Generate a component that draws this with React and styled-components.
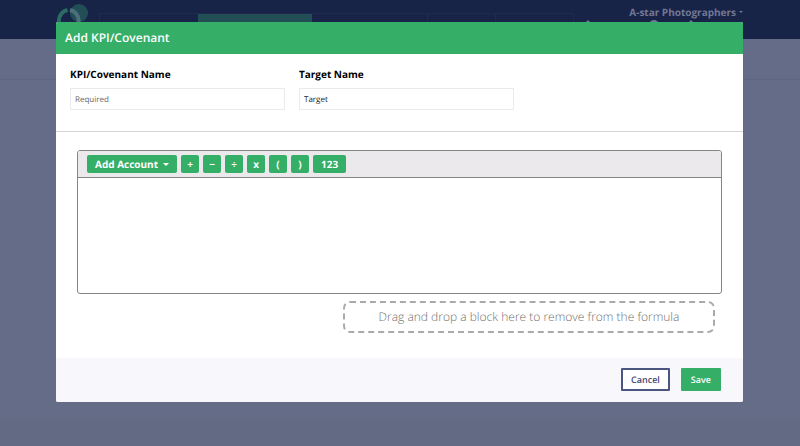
import React from 'react';
import styled, { createGlobalStyle } from 'styled-components';

const GlobalStyle = createGlobalStyle`
    * {
        box-sizing: border-box;
    }

    body {
        margin: 0;
        background: #656c87;
        font-family: 'Open Sans', 'Noto Sans', sans-serif;
        text-rendering: geometricPrecision;
    }

    button,
    input {
        font-family: inherit;
        text-rendering: inherit;
    }
`;

const Page = styled.div`
    position: relative;
    min-height: 100vh;
    display: flex;
    flex-direction: column;
`;

const TopBar = styled.header`
    height: 39px;
    flex: none;
    overflow: hidden;
    display: flex;
    align-items: flex-start;
    padding: 0 57px 0 56px;
    background: #182348;
`;

const Logo = styled.svg`
    width: 34px;
    height: 34px;
    flex: none;
    margin-top: 4px;
`;

const Tabs = styled.nav`
    flex: 474;
    display: flex;
    height: 26px;
    margin: 13px 0 0 9px;
    border: 1px solid #1f2a4e;
`;

const Tab = styled.a`
    flex: ${props => props.$size};
    background: ${props => (props.$active ? '#214f55' : 'transparent')};
    border-right: 1px solid ${props => (props.$divided ? '#1f2a4e' : 'transparent')};
`;

const Account = styled.div`
    flex: 170;
    display: flex;
    flex-direction: column;
    align-items: flex-end;
    padding-top: 4px;
`;

const AccountMenu = styled.button`
    display: flex;
    align-items: center;
    gap: 3px;
    padding: 0;
    border: 0;
    background: none;
    color: #727892;
    font-size: 10px;
    line-height: 16px;
    font-weight: 700;
    white-space: nowrap;
`;

const AccountIcons = styled.svg`
    width: 160px;
    height: 12px;
`;

const Caret = styled.span`
    border: ${props => props.$size}px solid transparent;
    border-top-color: currentColor;
    border-bottom: 0;
`;

const PageBody = styled.main`
    flex: 1;
    display: flex;
    flex-direction: column;
    justify-content: space-between;
`;

const SubBar = styled.div`
    height: 41px;
    border-bottom: 1px solid #606681;
`;

const PageFooter = styled.div`
    height: 27px;
    background: #626a84;
`;

const Modal = styled.section`
    position: absolute;
    top: 22px;
    left: 56px;
    right: 57px;
    overflow: hidden;
    border-radius: 2px;
    background: #fff;
`;

const ModalTitle = styled.h1`
    margin: 0;
    padding: 0 9px;
    background: #35ae68;
    color: #fff;
    font-size: 12px;
    line-height: 32px;
    font-weight: 600;
`;

const Fields = styled.div`
    display: flex;
    gap: 14px;
    padding: 12px 14px 21px;
    border-bottom: 1px solid #d5d5d5;
`;

const Field = styled.label`
    flex: 0 1 215px;
    display: flex;
    flex-direction: column;
    gap: 6px;
    color: #000;
    font-size: 10px;
    line-height: 16px;
    font-weight: 700;
`;

const TextInput = styled.input`
    width: 100%;
    height: 22px;
    padding: 0 4px;
    border: 1px solid #ebebeb;
    background: #fff;
    color: #222;
    font-size: 8px;

    &::placeholder {
        color: #666;
        opacity: 1;
    }
`;

const Builder = styled.div`
    display: flex;
    flex-direction: column;
    align-items: flex-end;
    gap: 7px;
    padding: 18px 21px 25px;
`;

const Editor = styled.div`
    width: 100%;
    overflow: hidden;
    border: 1px solid #858585;
    border-radius: 3px;
`;

const Toolbar = styled.div`
    display: flex;
    gap: 4px;
    padding: 4px 9px;
    border-bottom: 1px solid #858585;
    background: #ebe9eb;
`;

const ToolButton = styled.button`
    display: flex;
    align-items: center;
    justify-content: center;
    gap: 5px;
    min-width: 18px;
    height: 18px;
    padding: 0 ${props => (props.$wide ? 8 : 0)}px;
    border: 0;
    border-radius: 2px;
    background: #35ae68;
    color: #fff;
    font-size: 10px;
    line-height: 18px;
    font-weight: 700;
    white-space: nowrap;
`;

const Formula = styled.div`
    height: 115px;
`;

const DropZone = styled.div`
    width: 372px;
    max-width: 100%;
    margin-right: 7px;
    border: 2px dashed #aaa;
    border-radius: 7px;
    color: #707070;
    font-size: 12px;
    line-height: 28px;
    font-weight: 300;
    text-align: center;
`;

const Actions = styled.footer`
    display: flex;
    justify-content: flex-end;
    gap: 11px;
    padding: 10px 22px 11px;
    background: #f8f7fc;
`;

const ActionButton = styled.button`
    height: 23px;
    padding: 0 8px;
    border: 2px solid ${props => (props.$primary ? '#35ae68' : '#4a5580')};
    border-radius: 1px;
    background: ${props => (props.$primary ? '#35ae68' : '#fff')};
    color: ${props => (props.$primary ? '#fff' : '#3c4672')};
    font-size: 9px;
    line-height: 18px;
    font-weight: 600;
`;

const operators = ['+', '−', '÷', 'x', '(', ')'];

export default function App() {
    return (
        <Page>
            <GlobalStyle />
            <TopBar>
                <Logo viewBox="0 0 34 34" aria-hidden="true">
                    <circle cx="23" cy="9" r="9" fill="#214f55" />
                    <path d="M11.500 6a11 11 0 0 0 0 21.500" fill="none" stroke="#2b6b64" strokeWidth="4" />
                    <path d="M14 6a11 11 0 0 1 0 21.500" fill="none" stroke="#4c6f7b" strokeWidth="4" />
                </Logo>
                <Tabs>
                    <Tab $size={98} href="#overview" aria-label="Overview" />
                    <Tab $size={114} href="#kpis" aria-label="KPIs" $active />
                    <Tab $size={117} href="#reports" aria-label="Reports" $divided />
                    <Tab $size={68} href="#files" aria-label="Files" $divided />
                    <Tab $size={76} href="#settings" aria-label="Settings" />
                </Tabs>
                <Account>
                    <AccountMenu type="button">
                        A-star Photographers
                        <Caret $size={2} />
                    </AccountMenu>
                    <AccountIcons viewBox="0 0 160 12" fill="#727892" aria-hidden="true">
                        <path d="M5 0l5 5v7H0V5z" />
                        <circle cx="71" cy="5" r="5" />
                        <path d="M108 0l4 4v8h-8V4z" />
                    </AccountIcons>
                </Account>
            </TopBar>
            <PageBody>
                <SubBar />
                <PageFooter />
            </PageBody>
            <Modal role="dialog" aria-labelledby="modal-title">
                <ModalTitle id="modal-title">Add KPI/Covenant</ModalTitle>
                <Fields>
                    <Field>
                        KPI/Covenant Name
                        <TextInput type="text" placeholder="Required" />
                    </Field>
                    <Field>
                        Target Name
                        <TextInput type="text" defaultValue="Target" />
                    </Field>
                </Fields>
                <Builder>
                    <Editor>
                        <Toolbar>
                            <ToolButton type="button" $wide>
                                Add Account
                                <Caret $size={3} />
                            </ToolButton>
                            {operators.map(operator => (
                                <ToolButton type="button" key={operator}>
                                    {operator}
                                </ToolButton>
                            ))}
                            <ToolButton type="button" $wide>
                                123
                            </ToolButton>
                        </Toolbar>
                        <Formula />
                    </Editor>
                    <DropZone>Drag and drop a block here to remove from the formula</DropZone>
                </Builder>
                <Actions>
                    <ActionButton type="button">Cancel</ActionButton>
                    <ActionButton type="submit" $primary>
                        Save
                    </ActionButton>
                </Actions>
            </Modal>
        </Page>
    );
}
